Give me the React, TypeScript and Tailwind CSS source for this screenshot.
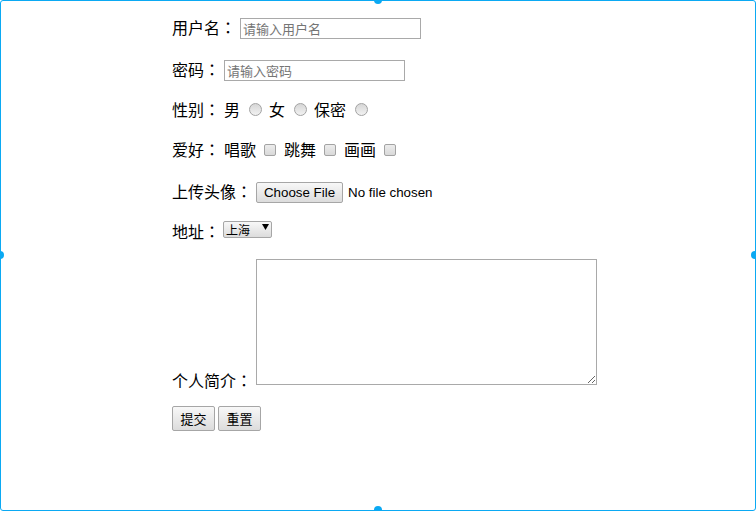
import React from "react";

const cjk = { fontFamily: '"Noto Sans CJK SC", "Noto Sans", sans-serif' };
const cjkTC = { fontFamily: '"Noto Sans CJK TC", "Noto Sans CJK SC", sans-serif' };
const arial = { fontFamily: '"Liberation Sans", Arial, sans-serif' };

function Radio() {
  return (
    <span className="block w-[13px] h-[13px] mb-[2px] rounded-full border border-[#a3a3a3] bg-gradient-to-b from-[#d6d6d6] to-[#f2f2f2] shrink-0" />
  );
}

function Check() {
  return (
    <span className="block w-[12px] h-[12px] rounded-[2px] border border-[#a3a3a3] bg-gradient-to-b from-[#ececec] to-[#d9d9d9] shrink-0" />
  );
}

function Label({ text, className = "" }: { text: string; className?: string }) {
  return (
    <span className={"flex text-[16px] leading-none text-black whitespace-nowrap " + className}>
      <span style={cjk}>{text}</span>
      <span style={cjkTC}>：</span>
    </span>
  );
}

function Txt({ children }: { children: React.ReactNode }) {
  return (
    <span className="text-[16px] leading-none text-black whitespace-nowrap pb-[2px]" style={cjk}>
      {children}
    </span>
  );
}

function TextBox({ width, placeholder }: { width: number; placeholder: string }) {
  return (
    <div
      className="h-[21px] border border-[#a9a9a9] bg-white flex items-center pl-[2px] text-[13px] text-[#757575] leading-none whitespace-nowrap overflow-hidden"
      style={{ ...cjk, width }}
    >
      {placeholder}
    </div>
  );
}

function GrayButton({ children, className = "" }: { children: React.ReactNode; className?: string }) {
  return (
    <div
      className={
        "flex items-center justify-center border border-[#a6a6a6] rounded-[2px] bg-gradient-to-b from-[#f8f8f8] to-[#dcdcdc] text-black whitespace-nowrap " +
        className
      }
    >
      {children}
    </div>
  );
}

export default function App() {
  return (
    <div className="relative w-[756px] h-[511px] overflow-hidden bg-white">
      <div className="w-full h-full border border-[#0ba9f3] rounded-[3px] pl-[171px] pt-[15px] flex flex-col">
        {/* 用户名 */}
        <div className="flex items-center h-[24px] gap-[4px]">
          <Label text="用户名" className="pb-[3px]" />
          <TextBox width={181} placeholder="请输入用户名" />
        </div>
        {/* 密码 */}
        <div className="flex items-center h-[24px] mt-[18px] gap-[4px]">
          <Label text="密码" className="pb-[3px]" />
          <TextBox width={181} placeholder="请输入密码" />
        </div>
        {/* 性别 */}
        <div className="flex items-center h-[24px] mt-[16px]">
          <Label text="性别" className="pb-[2px] mr-[4px]" />
          <Txt>男</Txt>
          <span className="ml-[9px] mr-[7px]"><Radio /></span>
          <Txt>女</Txt>
          <span className="ml-[9px] mr-[7px]"><Radio /></span>
          <Txt>保密</Txt>
          <span className="ml-[9px]"><Radio /></span>
        </div>
        {/* 爱好 */}
        <div className="flex items-center h-[24px] mt-[16px]">
          <Label text="爱好" className="pb-[2px] mr-[4px]" />
          <Txt>唱歌</Txt>
          <span className="mx-[8px]"><Check /></span>
          <Txt>跳舞</Txt>
          <span className="mx-[8px]"><Check /></span>
          <Txt>画画</Txt>
          <span className="ml-[8px]"><Check /></span>
        </div>
        {/* 上传头像 */}
        <div className="flex items-center h-[21px] mt-[20px] gap-[4px]">
          <Label text="上传头像" className="pb-[4px]" />
          <GrayButton className="w-[87px] h-[21px] text-[13.33px] leading-none">
            <span style={arial}>Choose File</span>
          </GrayButton>
          <span className="ml-[1px] text-[13.33px] leading-none text-black" style={arial}>
            No file chosen
          </span>
        </div>
        {/* 地址 */}
        <div className="flex items-center h-[17px] mt-[18px] gap-[3px]">
          <Label text="地址" className="pt-[2px]" />
          <div className="w-[49px] h-[17px] border border-[#a6a6a6] rounded-[2px] bg-gradient-to-b from-[#f8f8f8] to-[#dcdcdc] flex items-start pl-[2px] pt-[2px]">
            <span className="text-[12px] leading-[12px] text-black whitespace-nowrap" style={cjk}>
              上海
            </span>
            <svg className="ml-[12px] shrink-0" width="7" height="6" viewBox="0 0 7 6">
              <path d="M0 0 H7 L3.5 6 Z" fill="#000" />
            </svg>
          </div>
        </div>
        {/* 个人简介 */}
        <div className="flex items-end h-[126px] mt-[21px] gap-[4px]">
          <Label text="个人简介" className="-mb-[3px]" />
          <textarea className="w-[341px] h-[126px] border border-[#a9a9a9] bg-white resize p-[2px] outline-none" />
        </div>
        {/* 按钮 */}
        <div className="flex items-center h-[25px] mt-[21px] gap-[3px]">
          <GrayButton className="w-[43px] h-[25px] text-[13px] leading-none">
            <span style={cjk}>提交</span>
          </GrayButton>
          <GrayButton className="w-[43px] h-[25px] text-[13px] leading-none">
            <span style={cjk}>重置</span>
          </GrayButton>
        </div>
      </div>
      {/* selection handles */}
      <span className="absolute left-[374px] -top-[4px] w-[8px] h-[8px] rounded-full bg-[#0ba9f3]" />
      <span className="absolute left-[374px] top-[506px] w-[8px] h-[8px] rounded-full bg-[#0ba9f3]" />
      <span className="absolute -left-[4px] top-[251px] w-[8px] h-[8px] rounded-full bg-[#0ba9f3]" />
      <span className="absolute left-[751px] top-[251px] w-[8px] h-[8px] rounded-full bg-[#0ba9f3]" />
    </div>
  );
}
